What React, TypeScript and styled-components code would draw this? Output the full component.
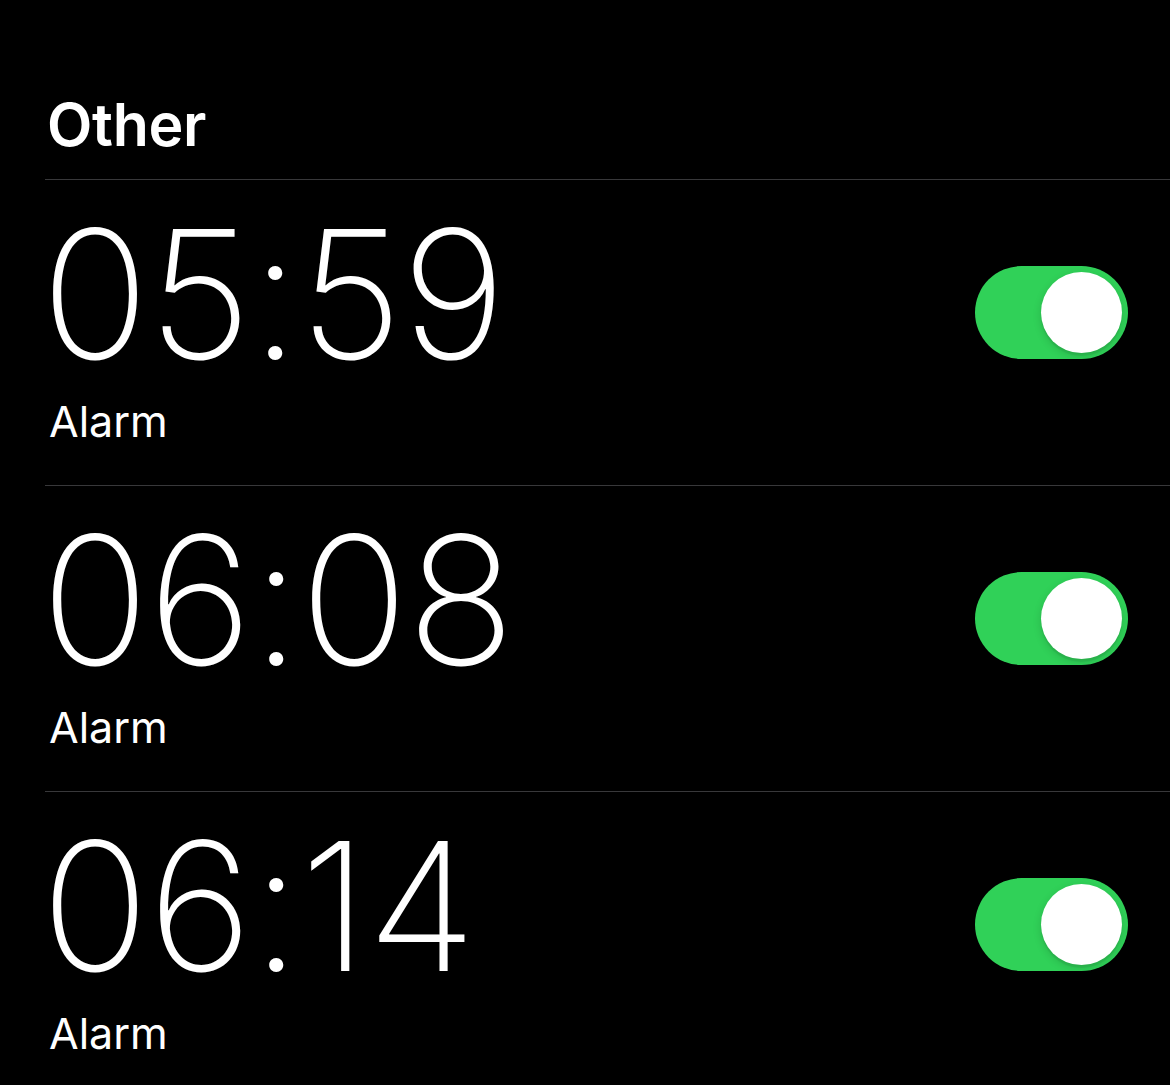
import React, { useState } from 'react';
import styled, { createGlobalStyle } from 'styled-components';

const GlobalStyle = createGlobalStyle`
	html, body {
		margin: 0;
		padding: 0;
		background: #000;
	}
	body {
		font-family: Inter, "Noto Sans", "Liberation Sans", sans-serif;
		color: #fff;
		-webkit-font-smoothing: antialiased;
	}
`;

type AlarmType = { id: number; time: string; label: string; on: boolean };

const initialAlarms: AlarmType[] = [
	{ id: 1, time: '05:59', label: 'Alarm', on: true },
	{ id: 2, time: '06:08', label: 'Alarm', on: true },
	{ id: 3, time: '06:14', label: 'Alarm', on: true },
];

const App = () => {
	const [alarms, setAlarms] = useState(initialAlarms);

	const toggle = (id: number) => {
		setAlarms(prev => prev.map(a => (a.id === id ? { ...a, on: !a.on } : a)));
	};

	return (
		<>
			<GlobalStyle />
			<Container>
				<SectionTitle>Other</SectionTitle>
				<List>
					{alarms.map(alarm => (
						<Row key={alarm.id}>
							<TextGroup>
								<Time>{alarm.time}</Time>
								<Label>{alarm.label}</Label>
							</TextGroup>
							<Switch role="switch" aria-checked={alarm.on} $on={alarm.on} onClick={() => toggle(alarm.id)}>
								<Knob $on={alarm.on} />
							</Switch>
						</Row>
					))}
				</List>
			</Container>
		</>
	);
};

export default App;

const Container = styled.div`
	display: flex;
	flex-direction: column;
	width: 100%;
	min-height: 1085px;
	background-color: #000;
	overflow: hidden;
`;

const SectionTitle = styled.h2`
	margin: 0;
	padding: 95px 0 25px 47px;
	font-size: 59px;
	line-height: 1;
	font-weight: 600;
	letter-spacing: -0.3px;
`;

const List = styled.div`
	display: flex;
	flex-direction: column;
	margin-left: 45px;
`;

const Row = styled.div`
	display: flex;
	justify-content: space-between;
	align-items: flex-start;
	padding: 25px 42px 42px 0;
	border-top: 1px solid #38383a;
`;

const TextGroup = styled.div`
	display: flex;
	flex-direction: column;
	gap: 16px;
`;

const Time = styled.p`
	margin: 0 0 0 -4px;
	font-size: 179px;
	line-height: 1;
	font-weight: 200;
	letter-spacing: -1px;
`;

const Label = styled.p`
	margin: 0 0 0 4px;
	font-size: 43px;
	line-height: 1;
	font-weight: 400;
`;

const Switch = styled.button<{ $on: boolean }>`
	position: relative;
	margin-top: 61px;
	width: 153px;
	height: 93px;
	padding: 0;
	border: none;
	border-radius: 47px;
	background-color: ${p => (p.$on ? '#30d158' : '#39393d')};
	cursor: pointer;
`;

const Knob = styled.span<{ $on: boolean }>`
	position: absolute;
	top: 6px;
	left: ${p => (p.$on ? '66px' : '6px')};
	width: 81px;
	height: 81px;
	border-radius: 50%;
	background-color: #fff;
	box-shadow: 0 3px 8px rgba(0, 0, 0, 0.15), 0 3px 1px rgba(0, 0, 0, 0.06);
`;
